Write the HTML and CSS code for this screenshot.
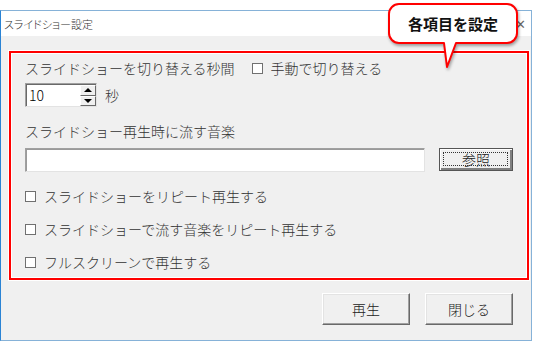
FILE: index.html
```html
<!DOCTYPE html>
<html lang="ja">
<head>
	<meta charset="UTF-8">
	<title>スライドショー設定</title>
	<link rel="stylesheet" href="styles.css">
</head>
<body>

	<div class="window">
		<div class="titlebar">
			<span class="title">スライドショー設定</span>
			<span class="close">✕</span>
		</div>

		<div class="client">
			<div class="frame">
				<div class="row">
					<span>スライドショーを切り替える秒間</span>
					<span class="check inline"><span class="box"></span>手動で切り替える</span>
				</div>

				<div class="row spin-row">
					<div class="spin">
						<span class="spin-value">10</span>
						<div class="spin-buttons">
							<span class="spin-btn"><i class="arrow-up"></i></span>
							<span class="spin-btn"><i class="arrow-down"></i></span>
						</div>
					</div>
					<span class="unit">秒</span>
				</div>

				<div class="row label">スライドショー再生時に流す音楽</div>

				<div class="file-row">
					<div class="field"></div>
					<button class="btn default">参照</button>
				</div>

				<div class="checks">
					<span class="check"><span class="box"></span>スライドショーをリピート再生する</span>
					<span class="check"><span class="box"></span>スライドショーで流す音楽をリピート再生する</span>
					<span class="check"><span class="box"></span>フルスクリーンで再生する</span>
				</div>
			</div>

			<div class="actions">
				<button class="btn">再生</button>
				<button class="btn">閉じる</button>
			</div>
		</div>
	</div>

	<div class="callout">
		<svg width="136" height="72" viewBox="0 0 136 72">
			<path d="M13,3 H121 A10,10 0 0 1 131,13 V32 A10,10 0 0 1 121,42 H70 L61,66 L58,42 H13 A10,10 0 0 1 3,32 V13 A10,10 0 0 1 13,3 Z"
				fill="#fff" stroke="#f00" stroke-width="2" stroke-linejoin="round"/>
		</svg>
		<span class="callout-text">各項目を設定</span>
	</div>

</body>
</html>
```

FILE: styles.css
```css
body {
	margin: 0;
	background: #fff;
	font-family: 'Noto Sans CJK JP', 'Noto Sans', sans-serif;
	font-size: 14px;
	font-weight: 300;
	color: #333;
	position: relative;
}

.window {
	margin-top: 10px;
	width: 532px;
	height: 331px;
	box-sizing: border-box;
	border: 1px solid #86b2d8;
	border-left-color: #2a83d4;
	background: #f0f0f0;
}

.titlebar {
	height: 25px;
	background: #fff;
	display: flex;
	align-items: center;
	justify-content: space-between;
	padding: 0 5px 0 3px;
}

.title {
	font-size: 11px;
	font-feature-settings: "palt";
	color: #333;
}

.close {
	font-size: 13px;
	color: #666;
}

.frame {
	margin: 15px 2px 0 8px;
	height: 229px;
	box-sizing: border-box;
	border: 2px solid #f00;
	box-shadow: 0 0 0 1px #fff, inset 0 0 0 1px #fff;
	padding: 5px 14px 0 14px;
}

.row {
	height: 20px;
	display: flex;
	align-items: center;
	white-space: nowrap;
}

.check {
	display: flex;
	align-items: center;
	height: 20px;
	white-space: nowrap;
}

.check.inline {
	margin-left: 17px;
}

.box {
	width: 9px;
	height: 9px;
	border: 1px solid #707070;
	background: #fff;
	margin-right: 8px;
}

.spin-row {
	margin-top: 5px;
	height: 24px;
}

.spin {
	width: 72px;
	height: 24px;
	box-sizing: border-box;
	display: flex;
	background: #fff;
	border: 1px solid #a0a0a0;
	border-right-color: #e3e3e3;
	border-bottom-color: #e3e3e3;
	box-shadow: inset 1px 1px 0 #696969;
}

.spin-value {
	flex: 1;
	padding: 1px 0 0 3px;
	line-height: 21px;
	color: #000;
}

.spin-buttons {
	width: 16px;
	display: flex;
	flex-direction: column;
	padding: 1px 0 0;
}

.spin-btn {
	flex: 1;
	background: #f0f0f0;
	border: 1px solid;
	border-color: #fff #696969 #696969 #fff;
	display: flex;
	align-items: center;
	justify-content: center;
}

.arrow-up {
	border: 4px solid transparent;
	border-top: 0;
	border-bottom: 4px solid #000;
}

.arrow-down {
	border: 4px solid transparent;
	border-bottom: 0;
	border-top: 4px solid #000;
}

.unit {
	margin-left: 8px;
}

.label {
	margin-top: 14px;
}

.file-row {
	margin-top: 7px;
	display: flex;
	align-items: flex-start;
}

.field {
	width: 400px;
	height: 24px;
	box-sizing: border-box;
	background: #fff;
	border: 1px solid #a0a0a0;
	border-right-color: #e3e3e3;
	border-bottom-color: #e3e3e3;
	box-shadow: inset 1px 1px 0 #9a9a9a;
}

.checks {
	margin-top: 14px;
	display: flex;
	flex-direction: column;
	gap: 13px;
}

.btn {
	position: relative;
	width: 88px;
	height: 32px;
	font-family: inherit;
	font-size: 14px;
	font-weight: 300;
	color: #222;
	background: #f0f0f0;
	border: 1px solid;
	border-color: #fff #696969 #696969 #fff;
	box-shadow: inset -1px -1px 0 #a0a0a0, inset 1px 1px 0 #e3e3e3;
	padding: 0;
}

.btn.default {
	width: 74px;
	height: 23px;
	margin-left: 14px;
	border-color: #555;
	box-shadow: inset 1px 1px 0 #fff, inset -2px -2px 0 #808080;
	line-height: 19px;
}

.btn.default::after {
	content: "";
	position: absolute;
	left: 3px;
	top: 3px;
	right: 4px;
	bottom: 4px;
	border: 1px dotted #333;
}

.actions {
	margin-top: 13px;
	padding-right: 18px;
	display: flex;
	justify-content: flex-end;
	gap: 15px;
}

.callout {
	position: absolute;
	left: 386px;
	top: 1px;
	width: 136px;
	height: 72px;
}

.callout svg {
	display: block;
	filter: drop-shadow(1px 2px 1.5px rgba(0, 0, 0, 0.35));
}

.callout-text {
	position: absolute;
	left: 3px;
	top: 3px;
	width: 128px;
	height: 39px;
	display: flex;
	align-items: center;
	justify-content: center;
	font-size: 15px;
	font-weight: bold;
	color: #111;
}
```
